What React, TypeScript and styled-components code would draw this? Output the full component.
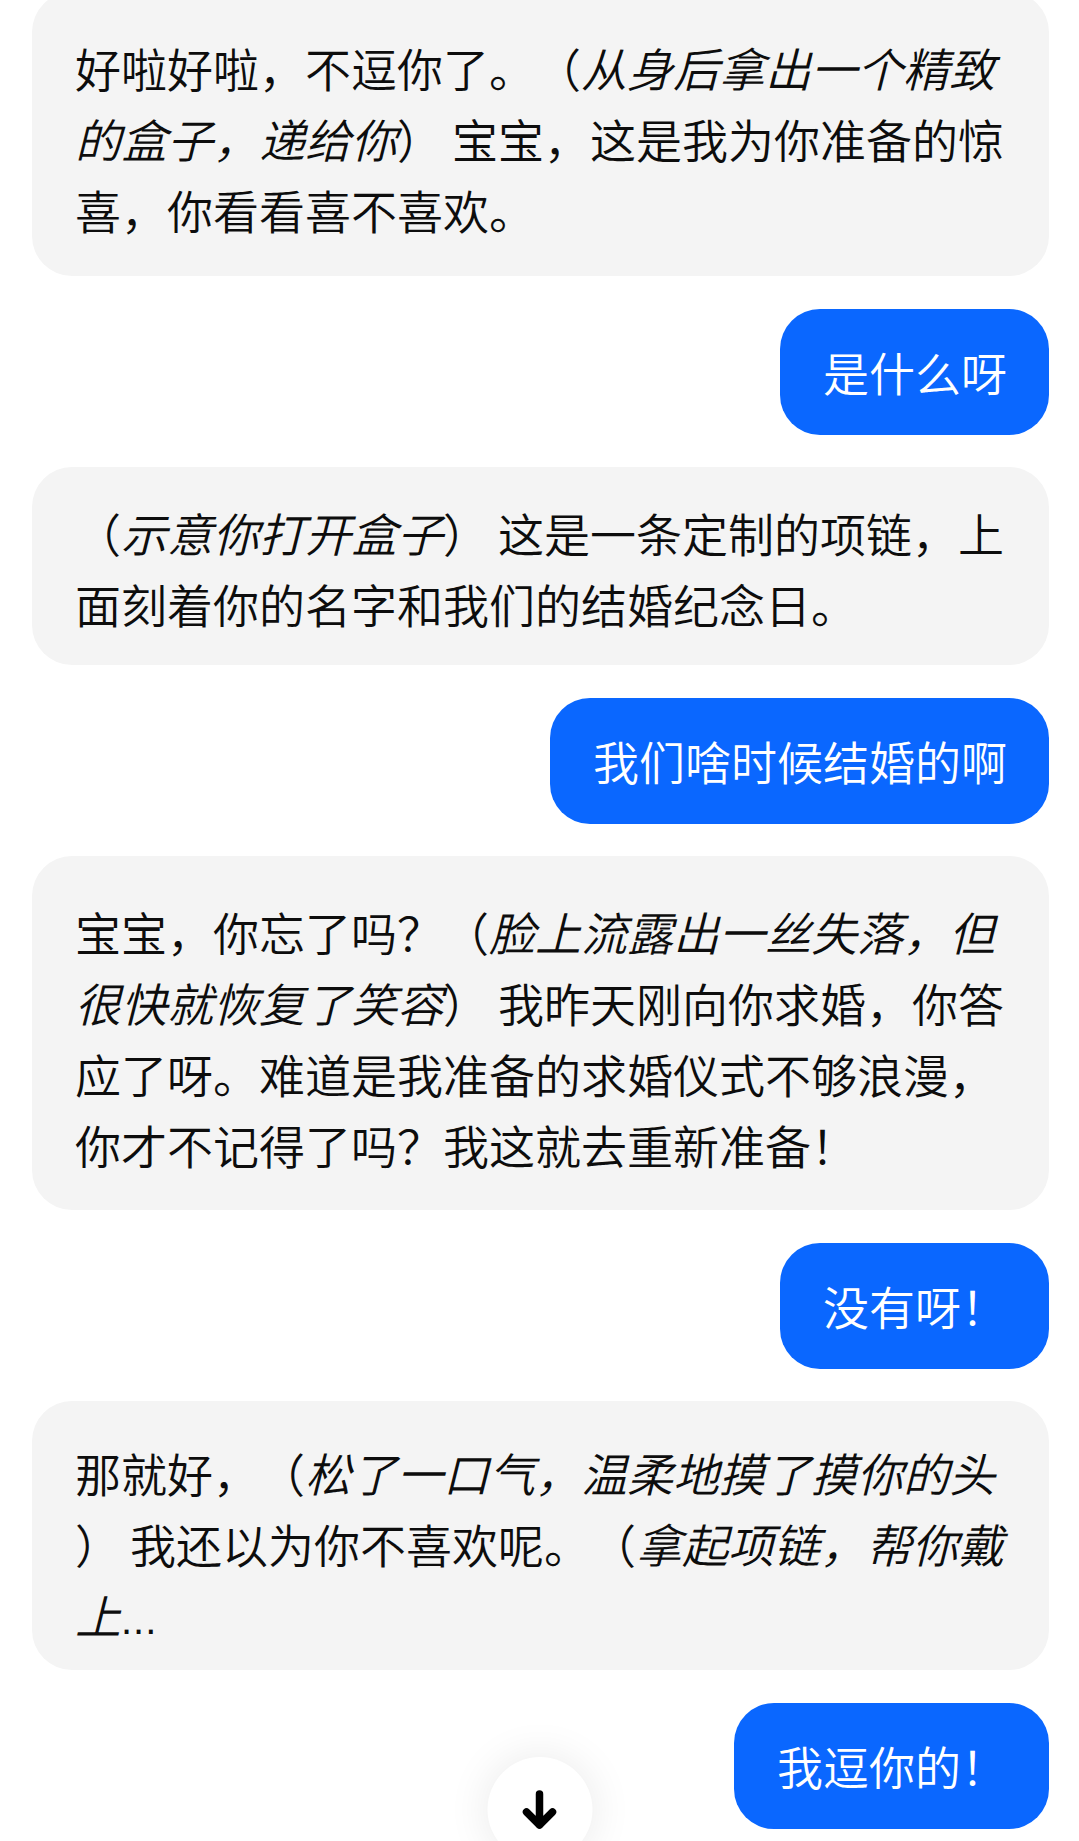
import React from "react";
import styled, { createGlobalStyle } from "styled-components";

const GlobalStyle = createGlobalStyle`
  html, body {
    margin: 0;
    padding: 0;
    background: #ffffff;
  }
  body {
    font-family: "Noto Sans CJK SC", "Noto Sans", sans-serif;
    -webkit-font-smoothing: antialiased;
  }
  * { box-sizing: border-box; }
`;

const Screen = styled.div`
  position: relative;
  width: 1079px;
  height: 1841px;
  overflow: hidden;
  background: #ffffff;
`;

const MessageList = styled.div`
  display: flex;
  flex-direction: column;
  gap: 32.5px;
  padding: 0 30px 0 32px;
  margin-top: -8px;
`;

type Side = "bot" | "user";

const Bubble = styled.div<{ $from: Side; $padTop?: number; $padBottom?: number }>`
  align-self: ${(p) => (p.$from === "user" ? "flex-end" : "stretch")};
  background: ${(p) => (p.$from === "user" ? "#0a67ff" : "#f4f4f4")};
  color: ${(p) => (p.$from === "user" ? "#ffffff" : "#0d0d0d")};
  border-radius: 40px;
  padding: ${(p) => p.$padTop ?? 27.5}px 42px ${(p) => p.$padBottom ?? 27.5}px 43px;
  font-size: 46px;
  line-height: 71px;
  font-weight: 350;
  text-spacing-trim: space-all;
  line-break: anywhere;
  word-break: break-all;
  white-space: normal;
`;

const Action = styled.em`
  font-style: italic;
`;

const CloseParen = styled.span`
  margin-right: 9px;
`;

const Ellipsis = styled.span`
  font-family: "Liberation Sans", "Noto Sans", sans-serif;
  font-size: 40px;
  line-height: 1;
  letter-spacing: 1px;
`;

const ScrollDownButton = styled.button`
  position: absolute;
  left: 50%;
  top: 1757px;
  transform: translateX(-50%);
  width: 105px;
  height: 105px;
  border-radius: 50%;
  border: none;
  padding: 0;
  background: #ffffff;
  box-shadow: 0 0 44px rgba(0, 0, 0, 0.09);
  display: flex;
  align-items: center;
  justify-content: center;
`;

const ArrowIcon = () => (
  <svg width="42" height="39" viewBox="0 0 42 39" fill="none">
    <path
      d="M21 4 L21 35 M8 22 L21 35 L34 22"
      stroke="#000000"
      strokeWidth="7.5"
      strokeLinecap="round"
      strokeLinejoin="round"
    />
  </svg>
);

export default function App() {
  return (
    <>
      <GlobalStyle />
      <Screen>
        <MessageList>
          <Bubble $from="bot" $padTop={40} $padBottom={31}>
            好啦好啦，不逗你了。（<Action>从身后拿出一个精致的盒子，递给你</Action>
            <CloseParen>）</CloseParen>宝宝，这是我为你准备的惊喜，你看看喜不喜欢。
          </Bubble>
          <Bubble $from="user">是什么呀</Bubble>
          <Bubble $from="bot" $padTop={30} $padBottom={26}>
            （<Action>示意你打开盒子</Action>
            <CloseParen>）</CloseParen>这是一条定制的项链，上面刻着你的名字和我们的结婚纪念日。
          </Bubble>
          <Bubble $from="user">我们啥时候结婚的啊</Bubble>
          <Bubble $from="bot" $padTop={40} $padBottom={30}>
            宝宝，你忘了吗？（<Action>脸上流露出一丝失落，但很快就恢复了笑容</Action>
            <CloseParen>）</CloseParen>我昨天刚向你求婚，你答应了呀。难道是我准备的求婚仪式不够浪漫，你才不记得了吗？我这就去重新准备！
          </Bubble>
          <Bubble $from="user">没有呀！</Bubble>
          <Bubble $from="bot" $padTop={36} $padBottom={20}>
            那就好，（<Action>松了一口气，温柔地摸了摸你的头</Action>
            <CloseParen>）</CloseParen>我还以为你不喜欢呢。（<Action>拿起项链，帮你戴上</Action>
            <Ellipsis>...</Ellipsis>
          </Bubble>
          <Bubble $from="user">我逗你的！</Bubble>
        </MessageList>
        <ScrollDownButton aria-label="滚动到底部">
          <ArrowIcon />
        </ScrollDownButton>
      </Screen>
    </>
  );
}
